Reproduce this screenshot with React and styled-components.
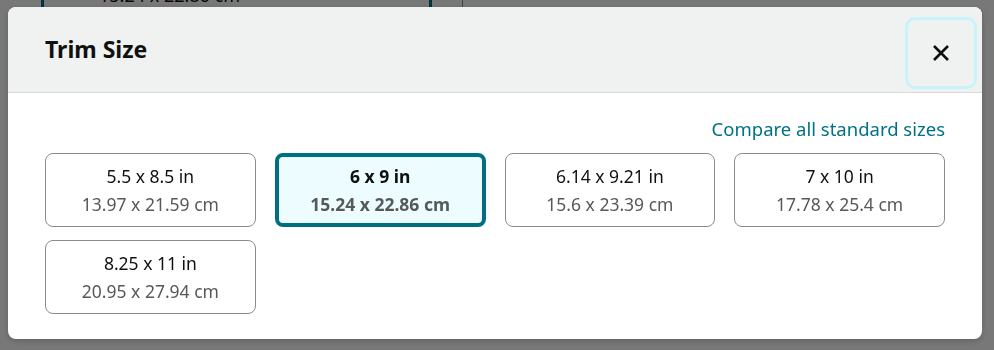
import React from 'react'
import styled, { createGlobalStyle } from 'styled-components'

const GlobalStyle = createGlobalStyle`
  html, body {
    margin: 0;
    padding: 0;
    background: #fff;
    font-family: "Noto Sans", "Liberation Sans", Arial, sans-serif;
    color: #0f1111;
  }
`

const sizes = [
  { id: 'a', inch: '5.5 x 8.5 in', cm: '13.97 x 21.59 cm' },
  { id: 'b', inch: '6 x 9 in', cm: '15.24 x 22.86 cm' },
  { id: 'c', inch: '6.14 x 9.21 in', cm: '15.6 x 23.39 cm' },
  { id: 'd', inch: '7 x 10 in', cm: '17.78 x 25.4 cm' },
  { id: 'e', inch: '8.25 x 11 in', cm: '20.95 x 27.94 cm' },
]

/* page behind the modal, mostly hidden */
const Page = styled.div`
  height: 350px;
  overflow: hidden;
  display: flex;
  align-items: flex-start;
  padding-left: 41px;
`
const PageCard = styled.div`
  width: 330px;
  height: 40px;
  margin-top: -22px;
  border: 3px solid #007185;
  border-radius: 8px;
  padding-left: 55px;
  font-size: 18px;
  line-height: 28px;
`
const PageDivider = styled.div`
  width: 1px;
  height: 30px;
  background: #888c8c;
  margin: -10px 16px 0 30px;
`
const PageText = styled.div`
  font-size: 18px;
  margin-top: -19px;
`

const Overlay = styled.div`
  position: fixed;
  inset: 0;
  background: rgba(0, 0, 0, 0.53);
`

const Modal = styled.div`
  position: fixed;
  left: 8px;
  top: 7px;
  width: 974px;
  height: 332px;
  box-sizing: border-box;
  background: #fff;
  border-radius: 8px;
  overflow: hidden;
  box-shadow: 0 2px 6px rgba(0, 0, 0, 0.2);
  display: flex;
  flex-direction: column;
`

const Header = styled.div`
  height: 86px;
  box-sizing: border-box;
  background: #f0f2f2;
  border-bottom: 1px solid #d5d9d9;
  display: flex;
  align-items: center;
  justify-content: space-between;
  padding: 0 5px 0 37px;
`

const Title = styled.h2`
  margin: 0 0 2px;
  font-size: 23px;
  font-weight: 700;
  color: #0f1111;
`

const CloseButton = styled.button`
  width: 72px;
  height: 72px;
  margin-top: 6px;
  box-sizing: border-box;
  border: 3px solid #c8f3fa;
  border-radius: 10px;
  background: transparent;
  display: flex;
  align-items: center;
  justify-content: center;
  cursor: pointer;
  padding: 0;
`

const Body = styled.div`
  padding: 22px 37px 25px 37px;
  display: flex;
  flex-direction: column;
`

const LinkRow = styled.div`
  display: flex;
  justify-content: flex-end;
  margin-bottom: 10px;
`

const Link = styled.a`
  color: #007185;
  font-size: 18.5px;
  line-height: 28px;
  text-decoration: none;
  cursor: pointer;
`

const Grid = styled.div`
  display: grid;
  grid-template-columns: repeat(4, 1fr);
  column-gap: 19px;
  row-gap: 13px;
`

const Card = styled.button`
  height: 74px;
  box-sizing: border-box;
  border: ${(p) => (p.$selected ? '4px solid #007080' : '1px solid #888c8c')};
  border-radius: 8px;
  background: ${(p) => (p.$selected ? '#edfdff' : '#fff')};
  font-family: inherit;
  display: flex;
  flex-direction: column;
  align-items: center;
  justify-content: center;
  padding: 0;
  cursor: pointer;
  font-weight: ${(p) => (p.$selected ? 700 : 400)};
`

const Inch = styled.span`
  font-size: 17.5px;
  line-height: 28px;
  color: #0f1111;
`

const Cm = styled.span`
  font-size: 17.5px;
  line-height: 28px;
  color: #565959;
`

const CloseIcon = () => (
  <svg width="20" height="20" viewBox="0 0 20 20">
    <path d="M3 3 L17 17 M17 3 L3 17" stroke="#0f1111" strokeWidth="2.6" strokeLinecap="butt" />
  </svg>
)

export default function App() {
  const selected = 'b'
  return (
    <>
      <GlobalStyle />
      <Page>
        <PageCard>15.24 x 22.86 cm</PageCard>
        <PageDivider />
        <PageText>Select a different size</PageText>
      </Page>
      <Overlay />
      <Modal role="dialog">
        <Header>
          <Title>Trim Size</Title>
          <CloseButton aria-label="Close">
            <CloseIcon />
          </CloseButton>
        </Header>
        <Body>
          <LinkRow>
            <Link>Compare all standard sizes</Link>
          </LinkRow>
          <Grid>
            {sizes.map((s) => (
              <Card key={s.id} $selected={s.id === selected}>
                <Inch>{s.inch}</Inch>
                <Cm>{s.cm}</Cm>
              </Card>
            ))}
          </Grid>
        </Body>
      </Modal>
    </>
  )
}
